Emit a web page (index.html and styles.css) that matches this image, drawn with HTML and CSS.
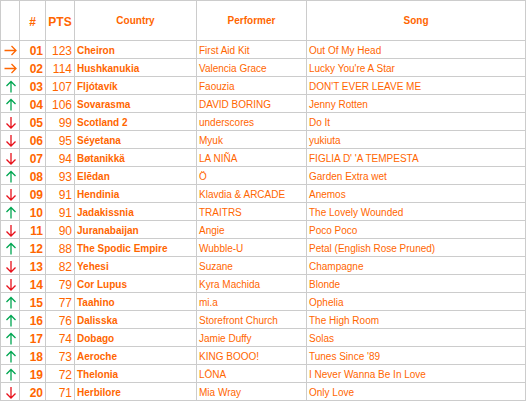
FILE: index.html
```html
<!DOCTYPE html>
<html>
<head>
<meta charset="utf-8">
<link rel="stylesheet" href="styles.css">
</head>
<body>
<svg class="defs" width="0" height="0" aria-hidden="true">
  <symbol id="same" viewBox="0 0 18 17"><path d="M3.5 9.5H15M10.5 5L15 9.5L10.5 14" fill="none" stroke="currentColor" stroke-width="1.3"/></symbol>
  <symbol id="up" viewBox="0 0 18 17"><path d="M10 4.5V15.5M5.5 9L10 4.5L14.5 9" fill="none" stroke="currentColor" stroke-width="1.3"/></symbol>
  <symbol id="down" viewBox="0 0 18 17"><path d="M10 4V15M5.5 10.5L10 15L14.5 10.5" fill="none" stroke="currentColor" stroke-width="1.3"/></symbol>
</svg>
<table class="chart">
  <colgroup><col class="c-move"><col class="c-pos"><col class="c-pts"><col class="c-country"><col class="c-perf"><col class="c-song"></colgroup>
  <thead>
    <tr><th></th><th class="big">#</th><th class="big">PTS</th><th>Country</th><th>Performer</th><th>Song</th></tr>
  </thead>
  <tbody>
    <tr><td class="mv same"><svg><use href="#same"/></svg></td><td class="pos">01</td><td class="pts">123</td><td class="ctry">Cheiron</td><td>First Aid Kit</td><td>Out Of My Head</td></tr>
    <tr><td class="mv same"><svg><use href="#same"/></svg></td><td class="pos">02</td><td class="pts">114</td><td class="ctry">Hushkanukia</td><td>Valencia Grace</td><td>Lucky You're A Star</td></tr>
    <tr><td class="mv up"><svg><use href="#up"/></svg></td><td class="pos">03</td><td class="pts">107</td><td class="ctry">Fljótavík</td><td>Faouzia</td><td>DON'T EVER LEAVE ME</td></tr>
    <tr><td class="mv up"><svg><use href="#up"/></svg></td><td class="pos">04</td><td class="pts">106</td><td class="ctry">Sovarasma</td><td>DAVID BORING</td><td>Jenny Rotten</td></tr>
    <tr><td class="mv down"><svg><use href="#down"/></svg></td><td class="pos">05</td><td class="pts">99</td><td class="ctry">Scotland 2</td><td>underscores</td><td>Do It</td></tr>
    <tr><td class="mv down"><svg><use href="#down"/></svg></td><td class="pos">06</td><td class="pts">95</td><td class="ctry">Séyetana</td><td>Myuk</td><td>yukiuta</td></tr>
    <tr><td class="mv down"><svg><use href="#down"/></svg></td><td class="pos">07</td><td class="pts">94</td><td class="ctry">Bøtanikkä</td><td>LA NIÑA</td><td>FIGLIA D' 'A TEMPESTA</td></tr>
    <tr><td class="mv up"><svg><use href="#up"/></svg></td><td class="pos">08</td><td class="pts">93</td><td class="ctry">Elēdan</td><td>Ö</td><td>Garden Extra wet</td></tr>
    <tr><td class="mv down"><svg><use href="#down"/></svg></td><td class="pos">09</td><td class="pts">91</td><td class="ctry">Hendinia</td><td>Klavdia &amp; ARCADE</td><td>Anemos</td></tr>
    <tr><td class="mv up"><svg><use href="#up"/></svg></td><td class="pos">10</td><td class="pts">91</td><td class="ctry">Jadakissnia</td><td>TRAITRS</td><td>The Lovely Wounded</td></tr>
    <tr><td class="mv down"><svg><use href="#down"/></svg></td><td class="pos">11</td><td class="pts">90</td><td class="ctry">Juranabaijan</td><td>Angie</td><td>Poco Poco</td></tr>
    <tr><td class="mv up"><svg><use href="#up"/></svg></td><td class="pos">12</td><td class="pts">88</td><td class="ctry">The Spodic Empire</td><td>Wubble-U</td><td>Petal (English Rose Pruned)</td></tr>
    <tr><td class="mv down"><svg><use href="#down"/></svg></td><td class="pos">13</td><td class="pts">82</td><td class="ctry">Yehesi</td><td>Suzane</td><td>Champagne</td></tr>
    <tr><td class="mv down"><svg><use href="#down"/></svg></td><td class="pos">14</td><td class="pts">79</td><td class="ctry">Cor Lupus</td><td>Kyra Machida</td><td>Blonde</td></tr>
    <tr><td class="mv up"><svg><use href="#up"/></svg></td><td class="pos">15</td><td class="pts">77</td><td class="ctry">Taahino</td><td>mi.a</td><td>Ophelia</td></tr>
    <tr><td class="mv up"><svg><use href="#up"/></svg></td><td class="pos">16</td><td class="pts">76</td><td class="ctry">Dalisska</td><td>Storefront Church</td><td>The High Room</td></tr>
    <tr><td class="mv up"><svg><use href="#up"/></svg></td><td class="pos">17</td><td class="pts">74</td><td class="ctry">Dobago</td><td>Jamie Duffy</td><td>Solas</td></tr>
    <tr><td class="mv up"><svg><use href="#up"/></svg></td><td class="pos">18</td><td class="pts">73</td><td class="ctry">Aeroche</td><td>KING BOOO!</td><td>Tunes Since '89</td></tr>
    <tr><td class="mv up"><svg><use href="#up"/></svg></td><td class="pos">19</td><td class="pts">72</td><td class="ctry">Thelonia</td><td>LŌNA</td><td>I Never Wanna Be In Love</td></tr>
    <tr><td class="mv down"><svg><use href="#down"/></svg></td><td class="pos">20</td><td class="pts">71</td><td class="ctry">Herbilore</td><td>Mia Wray</td><td>Only Love</td></tr>
  </tbody>
</table>
</body>
</html>
```

FILE: styles.css
```css
html, body {
  margin: 0;
  padding: 0;
  background: #fff;
}
.defs {
  position: absolute;
  width: 0;
  height: 0;
  overflow: hidden;
}
.chart {
  border-collapse: separate;
  border-spacing: 1px;
  background: #cccccc;
  table-layout: fixed;
  width: 526px;
  font-family: "Liberation Sans", Arial, sans-serif;
  font-size: 10px;
  color: #ff6600;
}
.c-move { width: 18px; }
.c-pos { width: 25px; }
.c-pts { width: 28px; }
.c-country { width: 121px; }
.c-perf { width: 109px; }
.c-song { width: 218px; }
.chart th, .chart td {
  background: #fff;
  white-space: nowrap;
  overflow: hidden;
}
.chart th {
  box-sizing: border-box;
  height: 39px;
  padding: 0 2px;
  font-weight: bold;
  text-align: center;
  vertical-align: middle;
}
.chart th.big {
  font-size: 12px;
  line-height: 16px;
  padding-top: 2px;
}
.chart td {
  box-sizing: border-box;
  height: 17px;
  padding: 3px 2px 0;
  line-height: 14px;
  vertical-align: top;
  text-align: left;
}
.chart td.mv {
  padding: 0;
  line-height: 0;
}
.chart td.mv svg {
  display: block;
  width: 18px;
  height: 17px;
}
.same { color: #ff6600; }
.up { color: #00a651; }
.down { color: #e8101a; }
.chart td.pos {
  font-size: 12px;
  font-weight: bold;
  text-align: right;
}
.chart td.pts {
  font-size: 12px;
  text-align: right;
}
.chart td.ctry {
  font-weight: bold;
}
```
